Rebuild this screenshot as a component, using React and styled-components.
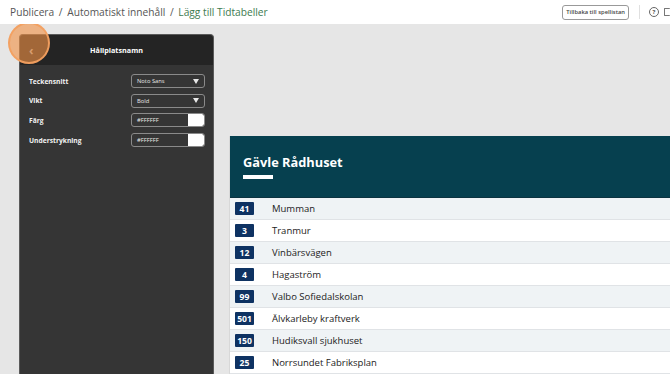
import React from "react";
import styled, { createGlobalStyle } from "styled-components";

const GlobalStyle = createGlobalStyle`
  html, body {
    margin: 0;
    padding: 0;
    width: 670px;
    height: 374px;
    overflow: hidden;
    background: #e6e6e6;
    font-family: "Open Sans", "Noto Sans", sans-serif;
  }
`;

const stops = [
  { line: "41", name: "Mumman" },
  { line: "3", name: "Tranmur" },
  { line: "12", name: "Vinbärsvägen" },
  { line: "4", name: "Hagaström" },
  { line: "99", name: "Valbo Sofiedalskolan" },
  { line: "501", name: "Älvkarleby kraftverk" },
  { line: "150", name: "Hudiksvall sjukhuset" },
  { line: "25", name: "Norrsundet Fabriksplan" },
];

function App() {
  return (
    <Page>
      <GlobalStyle />
      <TopBar>
        <Crumbs>
          Publicera <Sep>/</Sep> Automatiskt innehåll <Sep>/</Sep>{" "}
          <Current>Lägg till Tidtabeller</Current>
        </Crumbs>
        <TopActions>
          <BackButton>Tillbaka till spellistan</BackButton>
          <Divider />
          <HelpIcon>?</HelpIcon>
          <CutIcon />
        </TopActions>
      </TopBar>

      <Main>
        <Panel>
          <PanelHeader>
            <BackArrow>‹</BackArrow>
            <PanelTitle>Hållplatsnamn</PanelTitle>
          </PanelHeader>
          <Fields>
            <Label>Teckensnitt</Label>
            <Select>
              <span>Noto Sans</span>
              <Caret />
            </Select>
            <Label>Vikt</Label>
            <Select>
              <span>Bold</span>
              <Caret />
            </Select>
            <Label>Färg</Label>
            <ColorInput>
              <span>#FFFFFF</span>
              <Swatch />
            </ColorInput>
            <Label>Understrykning</Label>
            <ColorInput>
              <span>#FFFFFF</span>
              <Swatch />
            </ColorInput>
          </Fields>
          <Highlight />
        </Panel>

        <Preview>
          <Card>
            <CardHeader>
              <CardTitle>Gävle Rådhuset</CardTitle>
              <TitleBar />
            </CardHeader>
            {stops.map((s, i) => (
              <StopRow key={s.line} $alt={i % 2 === 0}>
                <LineCell>
                  <Badge>{s.line}</Badge>
                </LineCell>
                <StopName>{s.name}</StopName>
              </StopRow>
            ))}
          </Card>
        </Preview>
      </Main>
    </Page>
  );
}

const Page = styled.div`
  width: 670px;
  height: 374px;
  display: flex;
  flex-direction: column;
  overflow: hidden;
`;

const TopBar = styled.div`
  height: 24px;
  flex: none;
  background: #fff;
  display: flex;
  align-items: center;
  justify-content: space-between;
  padding-left: 10px;
`;

const Crumbs = styled.div`
  font-size: 10.2px;
  color: #555;
  white-space: nowrap;
`;

const Sep = styled.span`
  margin: 0 2px;
`;

const Current = styled.span`
  color: #3d7a4f;
`;

const TopActions = styled.div`
  display: flex;
  align-items: center;
  height: 100%;
`;

const BackButton = styled.div`
  height: 13px;
  padding: 0 3px;
  border: 1px solid #999;
  border-radius: 3px;
  font-size: 5.8px;
  font-weight: 600;
  color: #444;
  display: flex;
  align-items: center;
  white-space: nowrap;
`;

const Divider = styled.div`
  width: 1px;
  height: 14px;
  background: #e0e0e0;
  margin: 0 9px 0 10px;
`;

const HelpIcon = styled.div`
  width: 8px;
  height: 8px;
  border: 1px solid #666;
  border-radius: 50%;
  font-size: 6px;
  font-weight: 700;
  color: #555;
  display: flex;
  align-items: center;
  justify-content: center;
`;

const CutIcon = styled.div`
  width: 5px;
  height: 6px;
  border: 1px solid #777;
  border-right: none;
  border-radius: 1px;
  margin-left: 5px;
`;

const Main = styled.div`
  flex: 1;
  display: flex;
  padding: 10px 0 0 19px;
  gap: 15px;
  overflow: hidden;
`;

const Panel = styled.div`
  position: relative;
  width: 195px;
  flex: none;
  background: #353535;
  border: 1px solid #5a5a5a;
  border-bottom: none;
  border-radius: 4px 4px 0 0;
  box-sizing: border-box;
`;

const PanelHeader = styled.div`
  height: 30px;
  background: #242424;
  border-radius: 4px 4px 0 0;
  display: flex;
  align-items: center;
  justify-content: center;
  position: relative;
`;

const BackArrow = styled.span`
  position: absolute;
  left: 9px;
  top: 7px;
  font-size: 12px;
  color: #b0b0b0;
  font-weight: 700;
`;

const PanelTitle = styled.div`
  font-size: 7.2px;
  font-weight: 700;
  color: #fff;
`;

const Fields = styled.div`
  display: grid;
  grid-template-columns: 1fr 74px;
  grid-auto-rows: 14px;
  row-gap: 5.7px;
  align-items: center;
  padding: 9px 8px 0 9px;
`;

const Label = styled.div`
  font-size: 6.7px;
  font-weight: 700;
  color: #f2f2f2;
`;

const Select = styled.div`
  height: 14px;
  box-sizing: border-box;
  border: 1px solid #8a8a8a;
  border-radius: 3px;
  display: flex;
  align-items: center;
  justify-content: space-between;
  padding: 0 5px;
  font-size: 5.8px;
  color: #e8e8e8;
`;

const Caret = styled.div`
  width: 0;
  height: 0;
  border-left: 3.5px solid transparent;
  border-right: 3.5px solid transparent;
  border-top: 5px solid #e8e8e8;
`;

const ColorInput = styled.div`
  height: 14px;
  box-sizing: border-box;
  border: 1px solid #8a8a8a;
  border-radius: 3px;
  display: flex;
  align-items: center;
  justify-content: space-between;
  padding-left: 5px;
  font-size: 5.8px;
  color: #e8e8e8;
  overflow: hidden;
`;

const Swatch = styled.div`
  width: 16px;
  height: 100%;
  background: #fff;
  border-radius: 0 2px 2px 0;
`;

const Highlight = styled.div`
  position: absolute;
  left: -12px;
  top: -13px;
  width: 38px;
  height: 38px;
  border-radius: 50%;
  background: rgba(240, 145, 70, 0.62);
  border: 2px solid rgba(242, 160, 96, 0.95);
`;

const Preview = styled.div`
  flex: 1;
  padding-top: 102px;
  overflow: hidden;
`;

const Card = styled.div`
  width: 480px;
  background: #fff;
  border-left: 1px solid #d8d8d8;
`;

const CardHeader = styled.div`
  height: 62px;
  box-sizing: border-box;
  background: #06404f;
  padding: 17px 0 0 13px;
  border-bottom: 1px solid #0b3340;
`;

const CardTitle = styled.div`
  font-size: 12.8px;
  font-weight: 700;
  color: #fff;
  line-height: 18px;
`;

const TitleBar = styled.div`
  width: 30px;
  height: 3.5px;
  background: #fff;
  margin-top: 4px;
`;

const StopRow = styled.div`
  height: 22px;
  box-sizing: border-box;
  display: flex;
  align-items: center;
  background: ${(p) => (p.$alt ? "#eff3f5" : "#fff")};
  border-bottom: 1px solid #e0e3e6;
`;

const LineCell = styled.div`
  width: 29px;
  display: flex;
  justify-content: center;
`;

const Badge = styled.div`
  min-width: 19px;
  height: 13px;
  padding: 0 2px;
  box-sizing: border-box;
  background: #0e3262;
  color: #fff;
  font-size: 8.6px;
  font-weight: 700;
  display: flex;
  align-items: center;
  justify-content: center;
  border-radius: 1px;
`;

const StopName = styled.div`
  margin-left: 13px;
  font-size: 9.5px;
  color: #222;
`;

export default App;
